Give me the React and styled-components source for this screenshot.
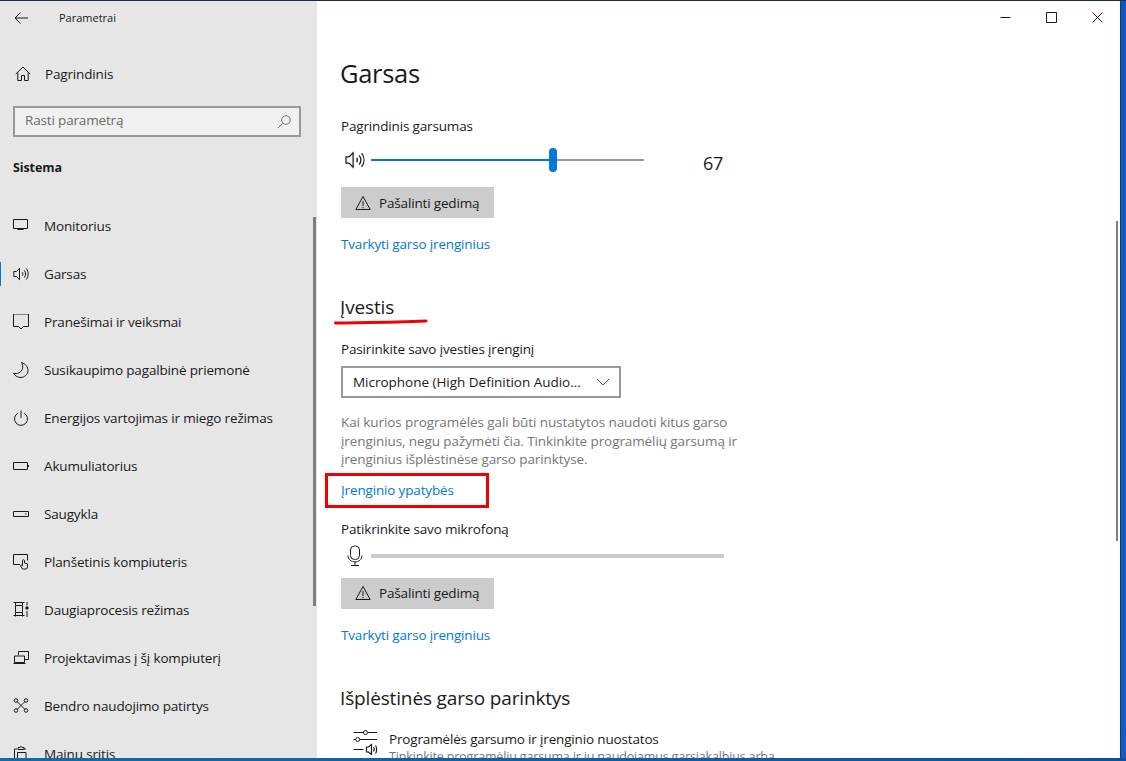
import React from 'react';
import styled, { createGlobalStyle } from 'styled-components';

const Global = createGlobalStyle`
  html, body {
    margin: 0;
    padding: 0;
    overflow: hidden;
    background: #0a5cc6;
  }
`;

const Desktop = styled.div`
  position: relative;
  width: 1126px;
  height: 761px;
  overflow: hidden;
  background: linear-gradient(#0b58c0, #0c5fc8);
  font-family: "Open Sans", "Noto Sans", sans-serif;
  color: #1a1a1a;
`;

const TopEdge = styled.div`
  height: 1px;
  background: #1c2e40;
`;

const Window = styled.div`
  display: flex;
  width: 1120px;
  height: 757px;
  overflow: hidden;
  background: #fff;
  box-shadow: 1px 1px 0 #163a70;
`;

const BottomEdge = styled.div`
  height: 3px;
  background: linear-gradient(90deg, #0c6ea8, #0b5cae 60%, #0a4fa8);
`;

const Sidebar = styled.aside`
  position: relative;
  flex: 0 0 317px;
  height: 100%;
  background: #e6e6e6;
  overflow: hidden;
`;

const TitleRow = styled.div`
  display: flex;
  align-items: center;
  height: 33px;
  padding-left: 14px;
  font-size: 11px;
  svg { margin-right: 31px; }
`;

const HomeRow = styled.div`
  display: flex;
  align-items: center;
  gap: 14px;
  height: 48px;
  margin-top: 16px;
  padding-left: 15px;
  font-size: 13.5px;
  letter-spacing: -0.16px;
`;

const SearchBox = styled.div`
  display: flex;
  align-items: center;
  justify-content: space-between;
  box-sizing: border-box;
  width: 288px;
  height: 31px;
  margin: 8px 0 0 13px;
  padding: 0 8px 3px 10px;
  border: 2px solid #999;
  background: #f0f0f0;
  color: #6b6b6b;
  font-size: 13.5px;
  letter-spacing: -0.16px;
  svg { stroke: #777; margin-top: 3px; }
`;

const SectionName = styled.div`
  height: 20px;
  margin: 21px 0 0 13px;
  font-size: 12.5px;
  line-height: 20px;
  font-weight: 700;
  letter-spacing: -0.1px;
`;

const NavList = styled.nav`
  display: flex;
  flex-direction: column;
  margin-top: 24px;
`;

const NavItem = styled.div`
  position: relative;
  display: flex;
  align-items: center;
  flex: 0 0 48px;
  padding-left: 13px;
  font-size: 13.5px;
  letter-spacing: -0.16px;
  white-space: nowrap;
  svg { flex: 0 0 16px; margin-right: 15px; }
  ${(p) => p.$active && `
    &::before {
      content: "";
      position: absolute;
      left: 0;
      top: 12px;
      width: 1px;
      height: 24px;
      background: #0078d7;
    }
  `}
`;

const SideScroll = styled.div`
  position: absolute;
  top: 216px;
  right: 1px;
  width: 3px;
  height: 389px;
  background: #7f7f7f;
`;

const Main = styled.main`
  position: relative;
  flex: 1;
  height: 100%;
  padding-left: 24px;
  overflow: hidden;
`;

const WindowButtons = styled.div`
  position: absolute;
  top: 0;
  right: 0;
  display: flex;
  svg { display: block; }
`;

const WindowButton = styled.div`
  display: flex;
  align-items: center;
  justify-content: center;
  width: 46px;
  height: 33px;
`;

const MainScroll = styled.div`
  position: absolute;
  top: 220px;
  right: 2px;
  width: 2px;
  height: 320px;
  background: #7f7f7f;
`;

const PageTitle = styled.h1`
  margin: 52px 0 0 -1px;
  height: 40px;
  font-size: 25.5px;
  line-height: 40px;
  font-weight: 400;
  letter-spacing: -0.3px;
`;

const Heading = styled.h2`
  margin: ${(p) => p.$top}px 0 0 -1px;
  height: 28px;
  font-size: 19px;
  line-height: 28px;
  font-weight: 400;
  letter-spacing: -0.15px;
`;

const Label = styled.div`
  height: 20px;
  margin-top: ${(p) => p.$top}px;
  font-size: 13.5px;
  line-height: 20px;
  letter-spacing: -0.16px;
`;

const SliderRow = styled.div`
  display: flex;
  align-items: center;
  height: 24px;
  margin-top: ${(p) => p.$top}px;
  svg { flex: 0 0 24px; margin-left: 2px; margin-right: 4px; }
`;

const Slider = styled.div`
  position: relative;
  display: flex;
  width: 273px;
  height: 2px;
`;

const SliderFill = styled.div`
  background: #0078d7;
`;

const SliderRest = styled.div`
  flex: 1;
  background: #999;
`;

const SliderThumb = styled.div`
  position: absolute;
  top: -11px;
  width: 8px;
  height: 24px;
  margin-left: -5px;
  border-radius: 4px;
  background: #0078d7;
`;

const VolumeValue = styled.div`
  margin: 6px 0 0 59px;
  font-size: 18px;
  letter-spacing: -0.2px;
`;

const LevelBar = styled.div`
  width: 353px;
  height: 4px;
  background: #ccc;
`;

const Button = styled.div`
  display: flex;
  align-items: center;
  gap: 8px;
  box-sizing: border-box;
  width: 153px;
  height: 31px;
  margin-top: ${(p) => p.$top}px;
  padding-left: 14px;
  background: #ccc;
  font-size: 13.5px;
  letter-spacing: -0.16px;
`;

const Link = styled.div`
  height: 20px;
  margin-top: ${(p) => p.$top}px;
  color: #0078d7;
  font-size: 13.5px;
  line-height: 20px;
  letter-spacing: -0.16px;
`;

const Select = styled.div`
  display: flex;
  align-items: center;
  justify-content: space-between;
  box-sizing: border-box;
  width: 280px;
  height: 32px;
  margin-top: 7px;
  padding: 0 9px 0 10px;
  border: 2px solid #999;
  font-size: 13.5px;
  letter-spacing: -0.02px;
  white-space: nowrap;
`;

const Help = styled.p`
  width: 410px;
  margin: 15px 0 0;
  color: #767676;
  font-size: 13.5px;
  line-height: 18.5px;
  letter-spacing: -0.09px;
`;

const OptionRow = styled.div`
  display: flex;
  gap: 11px;
  margin-top: 17px;
  padding-left: 12px;
`;

const OptionName = styled.div`
  font-size: 13.5px;
  line-height: 20px;
  letter-spacing: -0.16px;
`;

const OptionDesc = styled.div`
  color: #767676;
  font-size: 12.5px;
  line-height: 16px;
  letter-spacing: -0.16px;
  white-space: nowrap;
`;

const RedUnderline = styled.svg`
  position: absolute;
  left: 17px;
  top: 317px;
`;

const RedBox = styled.div`
  position: absolute;
  left: 8px;
  top: 472px;
  width: 164px;
  height: 35px;
  border: 3px solid #f00000;
  box-sizing: border-box;
`;

const Ico = ({ children, w = 16, h = 16, vb, sw = 1 }) => (
  <svg width={w} height={h} viewBox={vb || `0 0 ${w} ${h}`} fill="none" stroke="#1a1a1a" strokeWidth={sw}>
    {children}
  </svg>
);

const Speaker = ({ size = 16 }) => (
  <Ico w={size} h={size} vb="0 0 16 16">
    <path d="M.8 5.500h2.500L6.500 2.300v11.400L3.300 10.500H.8z" />
    <path d="M9.300 6.300c.8 1 .8 2.400 0 3.400M11.300 4.300c1.700 2.200 1.700 5.200 0 7.400M13.300 2.500c2.500 3.300 2.500 7.700 0 11" />
  </Ico>
);

const Warning = () => (
  <Ico>
    <path d="M8 1.500 15.200 14.500H.8zM8 6v5M8 12v1.200" />
  </Ico>
);

const navItems = [
  ['Monitorius', <Ico key="i"><path d="M.5 1.500h14v9H.5zM7.500 10.500v1.500M4.500 11.500h6" /></Ico>],
  ['Garsas', <Speaker key="i" />],
  ['Pranešimai ir veiksmai', <Ico key="i"><path d="M.5 0h15v12.500h-5L8 15 5.500 12.500h-5z" /></Ico>],
  ['Susikaupimo pagalbinė priemonė', <Ico key="i"><path d="M8.500.5c2.500 4 1 8.500-2.500 10.300-1.800.9-3.700 1-5.500.4 1.400 2.800 4.500 4.500 7.500 4.300C11.500 15.200 15 12.500 15 8.500 15 5 12.500 1.800 8.500.5z" /></Ico>],
  ['Energijos vartojimas ir miego režimas', <Ico key="i"><path d="M8 .5V8M4.800 3.200a6.500 6.500 0 1 0 6.400 0" /></Ico>],
  ['Akumuliatorius', <Ico key="i"><path d="M.5 4.500h14v7H.5zM15.500 7v2" /></Ico>],
  ['Saugykla', <Ico key="i"><path d="M.5 5.500h15v5H.5zM12 8h1.500" /></Ico>],
  ['Planšetinis kompiuteris', <Ico key="i"><path d="M7 10.500H.5V.5h14v6" /><path d="M9.500 15 7.500 12l.7-1 1.300.8V6.500c0-1 2-1 2 0v2.500l3 .8V13l-1 2z" /></Ico>],
  ['Daugiaprocesis režimas', <Ico key="i"><path d="M.5.500h11M.5 13.500h11M2.500 3.500h7v7h-7zM2.500.5v3M9.500.5v3M2.500 10.500v4M9.500 10.500v4M14 0v3.500M14 9v6" /><circle cx="14" cy="6" r="1.200" fill="#1a1a1a" /></Ico>],
  ['Projektavimas į šį kompiuterį', <Ico key="i"><path d="M5.500 5V1.500h10v8H11.500M1.500 6h10v6.500h-10zM.5 13.500h12" /></Ico>],
  ['Bendro naudojimo patirtys', <Ico key="i"><path d="m4 3.500 8 8M12 3.500l-8 8" /><circle cx="3" cy="2.500" r="1.800" /><circle cx="13" cy="2.500" r="1.800" /><circle cx="3" cy="12.500" r="1.800" /><circle cx="13" cy="12.500" r="1.800" /></Ico>],
  ['Mainų sritis', <Ico key="i"><path d="M4 3H1.500v12.500H4M4.500 6.500h8.500v9H4.500zM13 3h-2M5 3.500V1.500h2a1 1 0 0 1 2 0h2v2z" /></Ico>],
];

const VOLUME = 67;

function App() {
  return (
    <Desktop>
      <Global />
      <TopEdge />
      <Window>
        <Sidebar>
          <TitleRow>
            <Ico w={14} h={14}><path d="M14 7H1M6.500 1.500 1 7l5.500 5.500" /></Ico>
            Parametrai
          </TitleRow>
          <HomeRow>
            <Ico><path d="M.8 8 8 1l7.200 7M2.800 6.500v8h3.700V9.500h3v5h3.700v-8" /></Ico>
            Pagrindinis
          </HomeRow>
          <SearchBox>
            Rasti parametrą
            <Ico w={14} h={14}><circle cx="9" cy="5" r="4.300" /><path d="M5.800 8.200.8 13.200" /></Ico>
          </SearchBox>
          <SectionName>Sistema</SectionName>
          <NavList>
            {navItems.map(([name, icon]) => (
              <NavItem key={name} $active={name === 'Garsas'}>
                {icon}
                {name}
              </NavItem>
            ))}
          </NavList>
          <SideScroll />
        </Sidebar>
        <Main>
          <WindowButtons>
            <WindowButton>
              <Ico w={11} h={11}><path d="M.5 5.500h10" /></Ico>
            </WindowButton>
            <WindowButton>
              <Ico w={11} h={11}><path d="M.5.500h10v10H.5z" /></Ico>
            </WindowButton>
            <WindowButton>
              <Ico w={11} h={11}><path d="m.5.500 10 10M10.500.500l-10 10" /></Ico>
            </WindowButton>
          </WindowButtons>

          <PageTitle>Garsas</PageTitle>
          <Label $top={23}>Pagrindinis garsumas</Label>
          <SliderRow $top={12}>
            <Speaker size={20} />
            <Slider>
              <SliderFill style={{ width: `${VOLUME}%` }} />
              <SliderRest />
              <SliderThumb style={{ left: `${VOLUME}%` }} />
            </Slider>
            <VolumeValue>{VOLUME}</VolumeValue>
          </SliderRow>
          <Button $top={15}><Warning />Pašalinti gedimą</Button>
          <Link $top={16}>Tvarkyti garso įrenginius</Link>

          <Heading $top={39}>Įvestis</Heading>
          <Label $top={18}>Pasirinkite savo įvesties įrenginį</Label>
          <Select>
            Microphone (High Definition Audio...
            <Ico w={14} h={14}><path d="m1 4 6 6 6-6" stroke="#555" /></Ico>
          </Select>
          <Help>
            Kai kurios programėlės gali būti nustatytos naudoti kitus garso įrenginius, negu pažymėti čia. Tinkinkite programėlių garsumą ir įrenginius išplėstinėse garso parinktyse.
          </Help>
          <Link $top={11}>Įrenginio ypatybės</Link>
          <Label $top={19}>Patikrinkite savo mikrofoną</Label>
          <SliderRow $top={5}>
            <Ico w={20} h={22} vb="0 0 20 22">
              <rect x="5.500" y="1" width="9" height="13.500" rx="4" />
              <path d="M3 10.500c0 8.500 14 8.500 14 0M10 17v3.500M6 20.500h8" />
            </Ico>
            <LevelBar />
          </SliderRow>
          <Button $top={10}><Warning />Pašalinti gedimą</Button>
          <Link $top={16}>Tvarkyti garso įrenginius</Link>

          <Heading $top={39}>Išplėstinės garso parinktys</Heading>
          <OptionRow>
            <Ico w={25} h={26}>
              <path d="M.5 3.500h10M15 3.500h9M.5 10.500h2M7 10.500h17M.5 20.500h10" />
              <circle cx="12.500" cy="3.500" r="2" />
              <circle cx="4.700" cy="10.500" r="2" />
              <path d="M13.500 18h2l3-2.500v10l-3-2.500h-2zM20.500 18c.8 1 .8 3 0 4.500M22.500 16.500c1.500 2 1.500 6 0 8" strokeWidth="1.200" />
            </Ico>
            <div>
              <OptionName>Programėlės garsumo ir įrenginio nuostatos</OptionName>
              <OptionDesc>Tinkinkite programėlių garsumą ir jų naudojamus garsiakalbius arba</OptionDesc>
            </div>
          </OptionRow>

          <RedUnderline width="94" height="8" viewBox="0 0 94 8">
            <path d="M1.500 5C30 4.500 60 4.500 92 3" stroke="#f00000" strokeWidth="3" fill="none" strokeLinecap="round" />
          </RedUnderline>
          <RedBox />
          <MainScroll />
        </Main>
      </Window>
      <BottomEdge />
    </Desktop>
  );
}

export default App;
